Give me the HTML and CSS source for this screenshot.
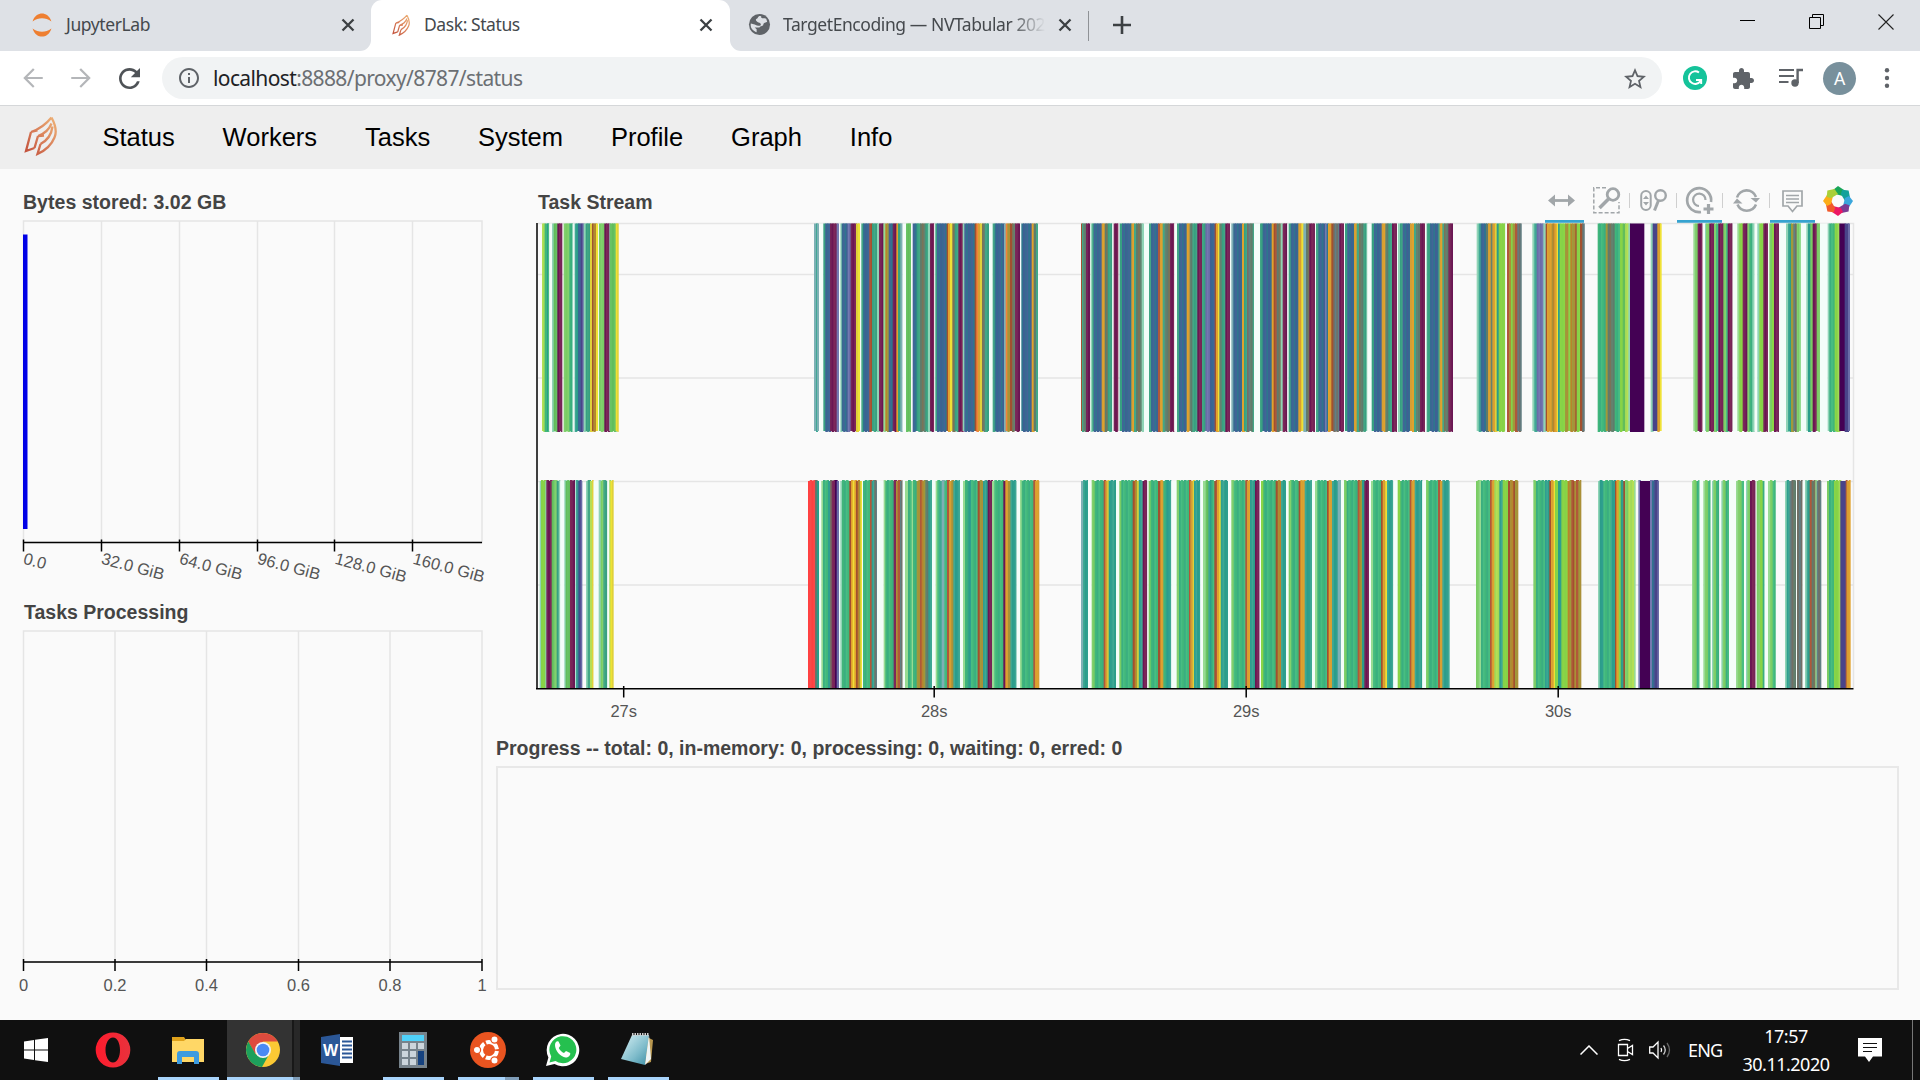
FILE: index.html
```html
<!DOCTYPE html>
<html lang="en">
<head>
<meta charset="utf-8">
<title>Dask: Status</title>
<link rel="stylesheet" href="styles.css">
</head>
<body>
<svg class="defs" width="0" height="0" aria-hidden="true">
  <defs>
    <linearGradient id="flame" x1="0" y1="1" x2="1" y2="0"><stop offset="0" stop-color="#c2503b"/><stop offset=".5" stop-color="#d9805a"/><stop offset="1" stop-color="#eeb276"/></linearGradient>
    <linearGradient id="opera" x1="0" x2="1"><stop offset="0" stop-color="#ff1b2d"/><stop offset="1" stop-color="#e8323c"/></linearGradient>
    <linearGradient id="pad" x1="0" y1="0" x2="1" y2="1"><stop offset="0" stop-color="#d8f1f5"/><stop offset=".6" stop-color="#7fbccb"/><stop offset="1" stop-color="#3d8ea5"/></linearGradient>
    <symbol id="dask" viewBox="0 0 33 40"><path d="M7 16.500Q19 12.500 27.500 2M7 16.500L2 35.500L10.500 32.500M7 16.500L13.500 15M27.500 2Q34 14 30.500 22Q26 33 13.500 38.500L16.500 28.500M14 20.500L10.500 32.500M14 20.500Q24 17 27.500 8M16.500 28.500Q27 23 28.500 11M14 20.500L20 20" fill="none" stroke="url(#flame)" stroke-width="2.300" stroke-linejoin="miter"/></symbol>
    <symbol id="x" viewBox="0 0 14 14"><path d="M1.500 1.500l11 11M12.500 1.500l-11 11" fill="none" stroke="#3c4043" stroke-width="2.300"/></symbol>
  </defs>
</svg>

<header class="tabs">
  <div class="tab tab-first">
    <svg class="fav" viewBox="0 0 24 28"><path d="M1 10C3 3 8 .5 12 .5S21 3 23 10C16 5 8 5 1 10zM1 18c7 5 15 5 22 0-2 7-7 9.500-11 9.500S3 25 1 18z" fill="#ee7f31"/></svg>
    <span class="tab-title jup">JupyterLab</span><svg class="close"><use href="#x"/></svg>
  </div>
  <div class="tab tab-active">
    <svg class="fav-dask"><use href="#dask"/></svg>
    <span class="tab-title das">Dask: Status</span><svg class="close"><use href="#x"/></svg>
  </div>
  <div class="tab tab-last">
    <svg class="globe" viewBox="0 0 24 24"><circle cx="12" cy="12" r="11" fill="#5f6368"/><path d="M13 3c-3 0-2 2-4 3s0 3 2 4c2 0 3 2 2 3s-4 0-6-1l-4-1c-1 4 2 8 6 9v-3l-2-2h5c1-2 4-1 4-3s3-2 4-3l-1-3c-2-1-4 0-5-1s1-1-1-2z" fill="#dee1e6"/></svg>
    <span class="tab-title tar">TargetEncoding — NVTabular 202</span><svg class="close"><use href="#x"/></svg>
  </div>
  <i class="tab-sep"></i>
  <svg class="plus" viewBox="0 0 18 18"><path d="M9 0v18M0 9h18" stroke="#3c4043" stroke-width="2.600"/></svg>
  <div class="window-buttons">
    <svg viewBox="0 0 16 16"><path d="M0 6.500h15" stroke="#000"/></svg>
    <svg viewBox="0 0 16 16"><path d="M.5 3.500h11v11H.5zM3.500 3.500v-3h11v11h-3" fill="none" stroke="#000"/></svg>
    <svg viewBox="0 0 16 16"><path d="M.5.5l15 15M15.500.5l-15 15" stroke="#222" stroke-width="1.100"/></svg>
  </div>
</header>

<div class="toolbar">
  <svg class="arrow" viewBox="0 0 24 24"><path fill="#b4b6b9" d="M21 11H6.800l6.700-6.700L12 3l-9 9 9 9 1.400-1.300L6.800 13H21z"/></svg>
  <svg class="arrow fwd" viewBox="0 0 24 24"><path fill="#b4b6b9" d="M3 11h14.200l-6.700-6.700L12 3l9 9-9 9-1.400-1.300 6.600-6.700H3z"/></svg>
  <svg class="reload" viewBox="4 4 16 16"><path fill="#4f5357" d="M17.650 6.350C16.200 4.900 14.210 4 12 4c-4.420 0-7.990 3.580-7.990 8s3.570 8 7.990 8c3.730 0 6.840-2.550 7.730-6h-2.080c-.82 2.330-3.040 4-5.650 4-3.310 0-6-2.690-6-6s2.690-6 6-6c1.660 0 3.140.69 4.220 1.780L13 11h7V4z"/></svg>
  <div class="omnibox">
    <svg class="info" viewBox="2 2 20 20"><path fill="#5f6368" d="M11 17h2v-6h-2v6zm1-15C6.480 2 2 6.480 2 12s4.480 10 10 10 10-4.480 10-10S17.520 2 12 2zm0 18c-4.410 0-8-3.590-8-8s3.590-8 8-8 8 3.590 8 8-3.590 8-8 8zM11 9h2V7h-2v2z"/></svg>
    <span class="url"><b>localhost</b>:8888/proxy/8787/status</span>
    <svg class="star" viewBox="2 2 20 19"><path fill="#5f6368" d="M22 9.240l-7.190-.62L12 2 9.190 8.630 2 9.240l5.460 4.730L5.820 21 12 17.270 18.180 21l-1.630-7.030L22 9.240zM12 15.400l-3.760 2.270 1-4.280-3.320-2.880 4.380-.38L12 6.100l1.710 4.040 4.380.38-3.320 2.880 1 4.280L12 15.400z"/></svg>
  </div>
  <svg class="gram" viewBox="0 0 24 24"><circle cx="12" cy="12" r="12" fill="#15c39a"/><path d="M16 6.600A6.300 6.300 0 1 0 17.500 15M13 14h5.200v4" fill="none" stroke="#fff" stroke-width="1.900"/></svg>
  <svg class="puzzle" viewBox="2 1 21 21"><path fill="#5f6368" d="M20.500 11H19V7c0-1.100-.9-2-2-2h-4V3.500C13 2.120 11.880 1 10.500 1S8 2.120 8 3.500V5H4c-1.100 0-1.990.9-1.990 2v3.800H3.500c1.490 0 2.700 1.210 2.700 2.700s-1.210 2.700-2.700 2.700H2V20c0 1.100.9 2 2 2h3.800v-1.500c0-1.490 1.210-2.700 2.700-2.700s2.700 1.210 2.700 2.700V22H17c1.100 0 2-.9 2-2v-4h1.500c1.380 0 2.500-1.120 2.500-2.500S21.880 11 20.500 11z"/></svg>
  <svg class="music" viewBox="0 0 24 20"><path d="M0 2h15M0 8h15M0 14h9.500" stroke="#5f6368" stroke-width="2.200"/><circle cx="16" cy="15" r="3.700" fill="#5f6368"/><path d="M18.600 15V2H24" fill="none" stroke="#5f6368" stroke-width="2.400"/></svg>
  <span class="avatar">A</span>
  <svg class="dots" viewBox="0 0 6 20"><g fill="#5f6368"><circle cx="3" cy="2.200" r="2.200"/><circle cx="3" cy="10" r="2.200"/><circle cx="3" cy="17.800" r="2.200"/></g></svg>
</div>

<nav class="nav">
  <svg class="logo"><use href="#dask"/></svg>
  <a>Status</a><a>Workers</a><a>Tasks</a><a>System</a><a>Profile</a><a>Graph</a><a>Info</a>
</nav>

<main class="board">
  <section class="left">
    <h2 class="top">Bytes stored: 3.02 GB</h2>
    <svg class="plot bytes" width="460" height="379" viewBox="23 221 460 379">
      <path class="grid" d="M101.500 221v321M179.500 221v321M257.500 221v321M334.500 221v321M412.500 221v321M23.500 221H482v321.500H23.500z"/>
      <rect x="23" y="234.500" width="4.500" height="294.500" fill="#0000e6"/>
      <path class="axis" d="M23 542.500H482M23.500 539.500v12M101.500 539.500v12M179.500 539.500v12M257.500 539.500v12M334.500 539.500v12M412.500 539.500v12"/>
      <g class="lbl"><text transform="translate(22.500 563.500) rotate(15)">0.0</text><text transform="translate(100.500 563.500) rotate(15)">32.0 GiB</text><text transform="translate(178.500 563.500) rotate(15)">64.0 GiB</text><text transform="translate(256.500 563.500) rotate(15)">96.0 GiB</text><text transform="translate(334 563.500) rotate(15)">128.0 GiB</text><text transform="translate(412 563.500) rotate(15)">160.0 GiB</text></g>
    </svg>
    <h2 class="second">Tasks Processing</h2>
    <svg class="plot" width="460" height="389" viewBox="23 631 460 389">
      <path class="grid" d="M115 631v331M206.500 631v331M298.500 631v331M390 631v331M23.500 631H482v331H23.500z"/>
      <path class="axis" d="M23 962H482.500M23.500 959v12M115 959v12M206.500 959v12M298.500 959v12M390 959v12M482 959v12"/>
      <g class="lbl mid"><text x="23.500" y="991">0</text><text x="115" y="991">0.2</text><text x="206.500" y="991">0.4</text><text x="298.500" y="991">0.6</text><text x="390" y="991">0.8</text><text x="482" y="991">1</text></g>
    </svg>
  </section>
  <section class="right">
    <div class="stream-head">
      <h2>Task Stream</h2>
      <svg class="tools" width="312" height="40" viewBox="1545 183 312 40">
        <g fill="#36a3d0"><path d="M1545 220h39v3h-39zM1677 220h45v3h-45zM1770 220h45v3h-45z"/></g>
        <g fill="none" stroke="#a1a6a9">
          <path d="M1555 200.500h13" stroke-width="2.800"/>
          <path d="M1548 200.500l7-6v12zM1575 200.500l-7-6v12z" fill="#a1a6a9" stroke="none"/>
          <path d="M1606 187.800h-12.200v25H1619V202" stroke-width="1.500" stroke-dasharray="4 2"/>
          <circle cx="1613" cy="194.500" r="5.800" stroke-width="2.800"/><path d="M1608.500 199l-9 9" stroke-width="3.500"/>
          <rect x="1641.200" y="191" width="9.500" height="19" rx="4.700" stroke-width="2"/><path d="M1643 199l3-3.500 3 3.500zM1643 202l3 3.500 3-3.500z" fill="#a1a6a9" stroke="none"/>
          <circle cx="1660.500" cy="195.500" r="5.300" stroke-width="2.400"/><path d="M1658.500 200.500l-4 10" stroke-width="3"/>
          <path d="M1629.500 193v15M1676.500 193v15M1722.500 193v15M1769.500 193v15" stroke="#cfcfcf"/>
          <path d="M1711 202A12 12 0 1 0 1701 212" stroke-width="2.700"/><path d="M1705.500 200A6.200 6.200 0 1 0 1699 206" stroke-width="2.200"/><path d="M1708.500 204v10M1703.500 209h10" stroke-width="3.200"/>
          <path d="M1737 197.500a10 10 0 0 1 19-.5M1756 204.500a10 10 0 0 1-18.500 0" stroke-width="2.600"/><path d="M1750.500 198h9.500l-4 4.500zM1733 203.500h9.500l-5.500-5z" fill="#a1a6a9" stroke="none"/>
          <path d="M1783 191h19v15h-5l-4.500 5.500-4.500-5.500h-5z" stroke-width="1.700"/><path d="M1786 195.500h13M1786 199h13M1786 202.500h13" stroke-width="1.700"/>
        </g>
        <g transform="translate(1838 201)"><g id="wheel"></g></g>
      </svg>
    </div>
    <svg class="plot stream" width="1360" height="515" viewBox="496 221 1360 515">
      <path class="grid" d="M538 223.500H1853.500V688M538 274.500H1853M538 378H1853M538 481.500H1853M538 585H1853"/>
      <g id="tasks"></g>
      <path class="axis" d="M537 223V689M536 688.700H1853.500M623.700 686v11.500M934.200 686v11.500M1246.200 686v11.500M1558.200 686v11.500"/>
      <g class="lbl mid"><text x="623.700" y="717">27s</text><text x="934.200" y="717">28s</text><text x="1246.200" y="717">29s</text><text x="1558.200" y="717">30s</text></g>
    </svg>
    <h2 class="prog">Progress -- total: 0, in-memory: 0, processing: 0, waiting: 0, erred: 0</h2>
    <div class="progress"></div>
  </section>
</main>

<footer class="taskbar">
  <div class="app"><svg class="win" viewBox="0 0 24 24"><path fill="#fff" d="M0 3.400L10 2v9.500H0zM11 1.800L24 0v11.500H11zM0 12.500h10V22L0 20.600zM11 12.500h13V24l-13-1.800z"/></svg></div>
  <div class="app"><svg viewBox="0 0 36 36"><path fill="url(#opera)" fill-rule="evenodd" d="M18 .5a17.300 17.500 0 1 0 0 35 17.300 17.500 0 1 0 0-35zM18 5.500c4.500 0 7 6 7 12.500s-2.500 12.500-7 12.500-7.500-6-7.500-12.500S13.500 5.500 18 5.500z"/></svg></div>
  <div class="app open"><svg viewBox="0 0 36 36"><path fill="#e0a21b" d="M2 5h12l2 3h3v4H2z"/><path fill="#ffd766" d="M2 9h12l2-2h18v23H2z"/><path fill="#3d9be0" d="M7 32V22q0-3 3-3h16q3 0 3 3v10h-5v-7H12v7z"/></svg></div>
  <div class="app open current"><svg viewBox="0 0 36 36"><circle cx="18" cy="18" r="17" fill="#fbc934"/><path fill="#dd4b3e" d="M3.300 9.500A17 17 0 0 1 32.700 9.500H18L10 22z"/><path fill="#1da05c" d="M3.300 9.500A17 17 0 0 0 17 35l7-12.500-6 3-7.500-3.500z"/><circle cx="18" cy="18" r="8" fill="#f4f4f4"/><circle cx="18" cy="18" r="6.300" fill="#4a8af4"/></svg></div>
  <div class="app"><svg viewBox="0 0 36 36"><path fill="#fff" d="M17 5h16v26H17z"/><path d="M22 9.500h10M22 13.500h10M22 17.500h10M22 21.500h10M22 25.500h10" stroke="#2b5797" stroke-width="2"/><path fill="#2b5797" d="M1 5l19-3v32L1 31z"/><text class="word-w" x="10.500" y="24">W</text></svg></div>
  <div class="app open"><svg viewBox="0 0 36 36"><path fill="#77838c" d="M4 0h28v36H4z"/><path fill="#4fd2fb" d="M7 3h22v6H7z"/><path fill="#ccd5dc" d="M7 11h6v6H7zM15 11h6v6h-6zM23 11h6v6h-6zM7 19h6v6H7zM15 19h6v6h-6zM7 27h6v6H7zM15 27h6v6h-6z"/><path fill="#16427f" d="M23 19h6v14h-6z"/></svg></div>
  <div class="app open multi"><svg viewBox="0 0 36 36"><circle cx="18" cy="18" r="18" fill="#e95420"/><circle cx="19" cy="18" r="8" fill="none" stroke="#fff" stroke-width="4" stroke-dasharray="14.700 2.050" stroke-dashoffset="-1"/><g fill="#fff" stroke="#e95420" stroke-width="1.200"><circle cx="7" cy="18" r="3.600"/><circle cx="24.500" cy="7.500" r="3.600"/><circle cx="24.500" cy="28.500" r="3.600"/></g></svg></div>
  <div class="app open"><svg class="wa" viewBox="0 0 36 36"><path fill="#fff" d="M2 34l2.400-8.600A16.300 16.300 0 1 1 10.500 32z"/><path fill="#25c04f" d="M5.500 30.500l1.700-6A13.500 13.500 0 1 1 11.500 29z"/><path fill="#fff" d="M11 13c0-3 2-4.500 3.500-3.500l2 4-1.700 2.500c1.200 2.500 3 4 5.200 5l2-2 4.200 2c.5 2.500-2 4.500-4.500 4.500C16.500 25 11 18.500 11 13z"/></svg></div>
  <div class="app open"><svg class="wa" viewBox="0 0 36 36"><path fill="#b8974f" d="M28 5l6 3-2 22-6 2z"/><path fill="url(#pad)" d="M13 3h17l-4 30L2 27z"/><path fill="#eef4f5" d="M30 3l2 24-6 6z"/><path d="M13 2.500h17" stroke="#ccc" stroke-width="3" stroke-dasharray="1.500 1"/></svg></div>
  <div class="tray">
    <svg class="chev" viewBox="0 0 18 10"><path d="M.5 9.500L9 1l8.500 8.500" fill="none" stroke="#fff" stroke-width="1.500"/></svg>
    <svg class="cam" viewBox="0 0 18 24"><path d="M1.500 6.500h9v11h-9zM10.500 10.500l5-3v9l-5-3M2 2.700Q7.500 0 13 2.700M2 21.300Q7.500 24 13 21.300" fill="none" stroke="#fff" stroke-width="1.300"/></svg>
    <svg class="vol" viewBox="0 0 22 20"><path d="M.7 7v6H4l5 5V2L4 7zM12 8q1.300 2 0 4" fill="none" stroke="#fff" stroke-width="1.300"/><path d="M14.500 5.500q3.500 4.500 0 9" fill="none" stroke="#ccc" stroke-width="1.300"/><path d="M18 3q5 7 0 14" fill="none" stroke="#666" stroke-width="1.300"/></svg>
    <span class="lang">ENG</span>
    <span class="clock">17:57<br>30.11.2020</span>
    <svg class="note" viewBox="0 0 24 24"><path fill="#fff" d="M0 0h24v18.500h-9L11 24l-4-5.500H0z"/><path d="M5 5.500h14M5 9.500h14M5 13.500h9" stroke="#111" stroke-width="1.200"/></svg>
    <i class="peek"></i>
  </div>
</footer>
<script src="script.js"></script>
</body>
</html>
```
FILE: styles.css
```css
* { box-sizing: border-box; }
body { margin: 0; width: 1920px; height: 1080px; overflow: hidden; display: flex; flex-direction: column; background: #fafafa; font-family: "Liberation Sans", Arial, sans-serif; }
svg { display: block; flex: none; }
.defs { position: absolute; }

.tabs { display: flex; align-items: center; height: 51px; font-family: "Noto Sans", sans-serif; background: linear-gradient(#dee1e6, #dee1e6) 0 0 / 1920px 36px no-repeat, linear-gradient(#fff, #fff) 355px 36px / 390px 15px no-repeat, #dee1e6; }
.tab { display: flex; align-items: center; height: 51px; flex: none; padding-bottom: 2px; }
.tab-first { width: 371px; padding-left: 30px; padding-right: 16px; background: #dee1e6; border-bottom-right-radius: 11px; }
.tab-active { width: 359px; padding-left: 21px; padding-right: 17px; background: #fff; border-radius: 11px 11px 0 0; }
.tab-last { width: 358px; padding-left: 18px; padding-right: 16px; background: #dee1e6; border-bottom-left-radius: 11px; }
.tab-title { font-size: 17.500px; color: #45494d; white-space: nowrap; flex: 1; line-height: 26px; padding-bottom: 2px; }
.jup { margin-left: 12px; letter-spacing: -.4px; }
.das { margin-left: 14px; letter-spacing: -.42px; }
.tar { margin-left: 12px; margin-right: 10px; letter-spacing: -.42px; -webkit-mask-image: linear-gradient(90deg, #000 86%, transparent 99%); mask-image: linear-gradient(90deg, #000 86%, transparent 99%); }
.fav { width: 24px; height: 24px; }
.fav-dask { width: 18px; height: 22px; }
.globe { width: 23px; height: 23px; }
.close { width: 14px; height: 14px; }
.tab-sep { width: 1px; height: 30px; background: #8f9296; }
.plus { width: 18px; height: 18px; margin-left: 24px; margin-bottom: 2px; }
.window-buttons { display: flex; gap: 53px; margin-left: auto; margin-right: 26px; padding-bottom: 8px; }
.window-buttons svg { width: 16px; height: 16px; }

.toolbar { display: flex; align-items: center; height: 55px; background: #fff; border-bottom: 1px solid #d5d7d9; }
.arrow { width: 26px; height: 26px; margin-left: 20px; }
.fwd { margin-left: 22px; }
.reload { width: 21px; height: 21px; margin-left: 25px; }
.omnibox { display: flex; align-items: center; width: 1500px; height: 42px; margin-left: 22px; padding-left: 17px; padding-right: 16px; border-radius: 21px; background: #f1f3f4; }
.info { width: 20px; height: 20px; }
.url { flex: 1; margin-left: 14px; font: 21px/30px "Noto Sans", sans-serif; letter-spacing: -.62px; color: #6b6f73; }
.url b { font-weight: 400; color: #202124; }
.star { width: 22px; height: 21px; }
.gram { width: 24px; height: 24px; margin-left: 21px; }
.puzzle { width: 21px; height: 21px; margin-left: 26px; }
.music { width: 24px; height: 20px; margin-left: 25px; }
.avatar { width: 33px; height: 33px; margin-left: 20px; border-radius: 50%; background: #78909c; color: #fff; font: 18px/33px Roboto, sans-serif; text-align: center; }
.dots { width: 6px; height: 20px; margin-left: 28px; }

.nav { display: flex; align-items: center; height: 63px; padding-left: 24px; background: #eee; font-size: 25.500px; color: #000; }
.logo { width: 33px; height: 41px; margin-right: 21.500px; margin-bottom: 4px; }
.nav a { padding: 0 23.950px; line-height: 60px; padding-bottom: 2px; }

.board { display: flex; height: 851px; flex: none; }
.left { width: 496px; padding-left: 23px; }
.right { flex: 1; }
h2 { margin: 0; height: 31px; font-size: 19.500px; line-height: 24px; color: #444; white-space: nowrap; }
h2.top { height: 52px; padding-top: 21px; letter-spacing: .03px; }
h2.second { padding-left: 1px; }
.stream-head { display: flex; justify-content: space-between; height: 52px; padding: 0 63px 0 42px; }
.stream-head h2 { padding-top: 21px; }
.tools { margin-top: 14px; }
.plot { overflow: visible; }
.grid { fill: none; stroke: #e5e5e5; stroke-width: 1.500; }
.axis { fill: none; stroke: #000; stroke-width: 1.500; }
.lbl { font-size: 16.500px; fill: #555; }
.mid { text-anchor: middle; }
.progress { width: 1403px; height: 224px; margin-top: -1px; border: 2px solid #e8e8e8; }

.taskbar { display: flex; height: 60px; background: #101010; flex: none; font-family: "Noto Sans", sans-serif; color: #fff; }
.app { display: flex; align-items: center; justify-content: center; width: 75px; height: 60px; }
.app svg { width: 36px; height: 36px; }
.app .win { width: 24px; height: 24px; margin-right: 3px; }
.app .wa { margin-right: 2px; }
.app.open { background: linear-gradient(#a8d4fb, #a8d4fb) 8px 57px / 61px 3px no-repeat; }
.app.current { background: linear-gradient(#a8d4fb, #a8d4fb) 2px 57px / 66px 3px no-repeat, linear-gradient(#7f9db8, #7f9db8) 68px 57px / 7px 3px no-repeat, linear-gradient(90deg, #101010 2px, #333 2px, #333 67px, #181818 67px, #181818 69px, #282828 69px); }
.app.multi { background: linear-gradient(#a8d4fb, #a8d4fb) 8px 57px / 47px 3px no-repeat, linear-gradient(#7f9db8, #7f9db8) 55px 57px / 14px 3px no-repeat; }
.word-w { font: bold 16px "Liberation Sans", sans-serif; fill: #fff; text-anchor: middle; }
.tray { display: flex; align-items: center; margin-left: auto; }
.chev { width: 18px; height: 10px; margin-right: 19px; }
.cam { width: 18px; height: 24px; margin-right: 14px; }
.vol { width: 22px; height: 20px; margin-right: 17px; }
.lang { width: 54px; font-size: 18px; letter-spacing: -.8px; }
.clock { width: 88px; font-size: 18px; line-height: 28px; letter-spacing: -.5px; text-align: center; white-space: nowrap; }
.note { width: 24px; height: 24px; margin-left: 28px; }
.peek { width: 1px; height: 60px; margin: 0 7px 0 30px; background: #777; }
```
FILE: script.js
```js
// Task colours; codes with several shades are drawn as alternating fine stripes.
const shades = {
  e: ['#48bd82', '#40b67a', '#3aae80'], t: ['#37a081', '#43a786'], T: ['#2f9f8f', '#3fa894', '#2b9d8a'],
  b: ['#2f758e', '#3f6094', '#376a91', '#436498'], v: ['#6a6ca8', '#7479b0'], V: ['#494489'],
  g: ['#79cc64', '#82d06e'], G: ['#62bd5b', '#69c365'], l: ['#8ad546', '#85d249'], k: ['#b5df55', '#a2da58'],
  m: ['#8fd4b6'], n: ['#97db92'], w: ['#f4fdf9'], s: ['#5f7b6b', '#7a7358', '#648270'], S: ['#607f85', '#736f65'],
  p: ['#752458', '#6a1653', '#7d2859'], P: ['#440154'], y: ['#efe135', '#dfd13b'], o: ['#d69f33', '#e0a22e'],
  O: ['#aa9037', '#b8842c', '#a0993b'], r: ['#a2502f', '#b0583a'], R: ['#ff4040', '#fb4a4a'], q: ['#f18339'],
  c: ['#7eb0b5']
};

// Each run lists "offset code" pairs in thirds of a pixel from its origin; "." leaves a gap.
const runs = [
  [530, 0, '36k 44e 51T 54e 58w 66m 71G 82p 97. 101g 118e 126m 130w 134T 144b 152V 157v 161m 167t 180y 186r 190O 198y 205w 207g 223p 238m 240G 257y 266.'],
  [800, 0, '42c 48T 51c 57w 70t 76b 90p 110v 117w 121m 125b 143v 152p 168y 180w 184t 189b 208r 216t 231m 237p 250n 256O 266b 278p 289o 294t 301c 308w 318G 333w 338b 350t 360s 376t 384m 390p 403w 406t 411b 440r 444o 450y 457s 464t 475p 488m 493b 524r 529q 534o 540y 546s 555t 567w 578t 584b 612c 617q 622O 630r 636s 645p 660w 664b 695o 701s 708t 714.'],
  [1070, 0, '33r 36t 40s 48p 60. 62m 67t 71b 95o 104s 113t 127w 131p 145. 149t 156b 184o 192t 198s 215m 222w 237t 243b 264r 270o 278t 284s 300p 313w 321t 327b 350o 359s 367t 382p 396t 406v 420b 434r 438o 444y 448s 455t 466p 480w 484c 490b 516o 522t 531S 540s 548t 552w 570t 578b 605o 611r 620s 632m 638p 652w 656t 662b 685o 694y 700c 708s 718p 735w 738t 745b 765v 770b 774o 784r 790S 808p 822w 825t 832b 852o 860t 867s 880t 889m 892w 905t 912b 935o 946s 955t 966p 981w 984m 990t 998b 1020o 1032t 1038s 1050p 1065w 1070t 1080b 1105t 1109o 1117t 1122s 1135p 1149.'],
  [1460, 0, '50m 56T 62b 78s 84o 92s 97o 105y 110T 116l 136w 141r 147O 153l 158O 165r 172S 185. 217m 223T 230v 250m 257r 261o 275O 283o 290y 294T 299l 315O 325l 331O 346r 350l 360r 366S 374. 413e 437O 443s 464e 480l 488G 495k 505m 510P 553. 572m 578V 592o 600y 605. 700n 705g 713p 728w 735m 738g 748p 762g 768e 775p 790g 798e 803p 818w 832n 838l 848p 862g 868e 877m 884w 892m 898l 910p 924w 928g 936l 942p 957w 978m 984T 993O 1000S 1010g 1018n 1023w 1039m 1044T 1051g 1058p 1070g 1080w 1103m 1108e 1124l 1133k 1138P 1154V 1164v 1170.'],
  [530, 1, '29m 33l 46m 49p 65G 73g 80t 86m 91w 103m 107G 120p 135w 137T 143b 148V 152v 157. 168m 173t 180k 186y 191w 206m 212g 220t 232w 238k 241y 251.'],
  [800, 1, '24R 45S 50T 57w 64n 69e 84T 90S 95p 105P 110v 117w 121m 126e 148r 153o 158y 163o 168r 173O 181y 186w 189e 210r 215T 223S 231w 251n 256e 281p 288O 293r 300S 308w 315n 324e 335n 339e 350O 360r 365O 376s 385T 396w 407n 412e 418T 425c 433e 441r 447o 454O 460T 480w 489n 495e 505T 513e 533r 539O 549T 563p 576n 583e 610p 616o 624O 631T 650w 660n 665e 700r 705o 718.'],
  [1070, 1, '33c 39T 54w 65g 74e 101r 106o 112y 116T 138w 148g 154e 188r 194O 202y 206T 218p 232w 236g 242e 264r 271o 280e 289T 304w 320g 327e 357r 361o 368y 372T 391w 399n 407G 415T 424e 433r 441o 448y 452T 474w 484g 491e 526r 531o 540T 555p 569w 573l 580e 617r 623O 633T 648w 656g 664e 686r 691o 704T 726w 735n 742e 771r 776o 786T 803c 813w 822g 830e 863r 868O 876T 883p 897w 903n 909e 933r 938o 946y 951T 970w 983l 991e 1019r 1024o 1034T 1057w 1068g 1076e 1104r 1110o 1117T 1139.'],
  [1460, 1, '48g 58n 63e 90r 95o 103k 118T 128l 144r 150O 160r 165O 175. 220g 228e 255T 268r 273o 281y 285l 294T 304l 323O 334r 343O 348r 355O 364. 414m 419T 430e 452T 465r 469o 476l 482T 490r 495g 505k 522n 527. 535v 540P 570v 576b 584V 592v 597. 696n 700g 710e 719w 730n 735g 744e 752w 756m 760g 768e 778w 784m 788g 797e 807w 828n 833g 845e 852w 858m 862g 870p 887w 890g 900l 908e 914w 924n 930g 938e 947. 975m 980T 989S 1000s 1008w 1011S 1028w 1035m 1040T 1049r 1055s 1066n 1070S 1084. 1101g 1107e 1122l 1136k 1141V 1157r 1160o 1172.']
];

const ns = 'http://www.w3.org/2000/svg';
const tasks = document.getElementById('tasks');
function bar(x, w, lane, fill, i) {
  const r = document.createElementNS(ns, 'rect');
  const cut = i % 2 ? 0 : 1;
  r.setAttribute('x', x.toFixed(2));
  r.setAttribute('width', w.toFixed(2));
  r.setAttribute('y', lane ? 480 + cut : 223.5);
  r.setAttribute('height', 208.5 - cut);
  r.setAttribute('fill', fill);
  tasks.appendChild(r);
}
for (const [origin, lane, text] of runs) {
  const marks = text.split(' ').map(s => [parseFloat(s), s.slice(-1)]);
  for (let i = 0; i < marks.length - 1; i++) {
    const [a, code] = marks[i], [b, next] = marks[i + 1];
    if (code === '.') continue;
    const set = shades[code];
    const n = set.length > 1 ? Math.max(1, Math.round((b - a) / 5)) : 1;
    const step = (b - a) / n / 3;
    const solid = code !== 'w' && next !== 'w' && next !== '.';
    for (let k = 0; k < n; k++) {
      const overlap = k < n - 1 || solid ? 1 : 0;
      bar(origin + a / 3 + k * step, step + overlap, lane, set[(k + i) % set.length], k + i);
    }
  }
}

// Eight coloured blades of the plot library's wheel logo.
const wheel = document.getElementById('wheel');
['#18a558', '#12a19a', '#3aa6dc', '#7b3b93', '#ec1763', '#f1592a', '#fbad18', '#a9cf38'].forEach((c, i) => {
  const p = document.createElementNS(ns, 'path');
  p.setAttribute('d', 'M0-15L6-11L5-5L-3-7L-5-11Z');
  p.setAttribute('fill', c);
  p.setAttribute('transform', `rotate(${i * 45})`);
  wheel.appendChild(p);
});
```
